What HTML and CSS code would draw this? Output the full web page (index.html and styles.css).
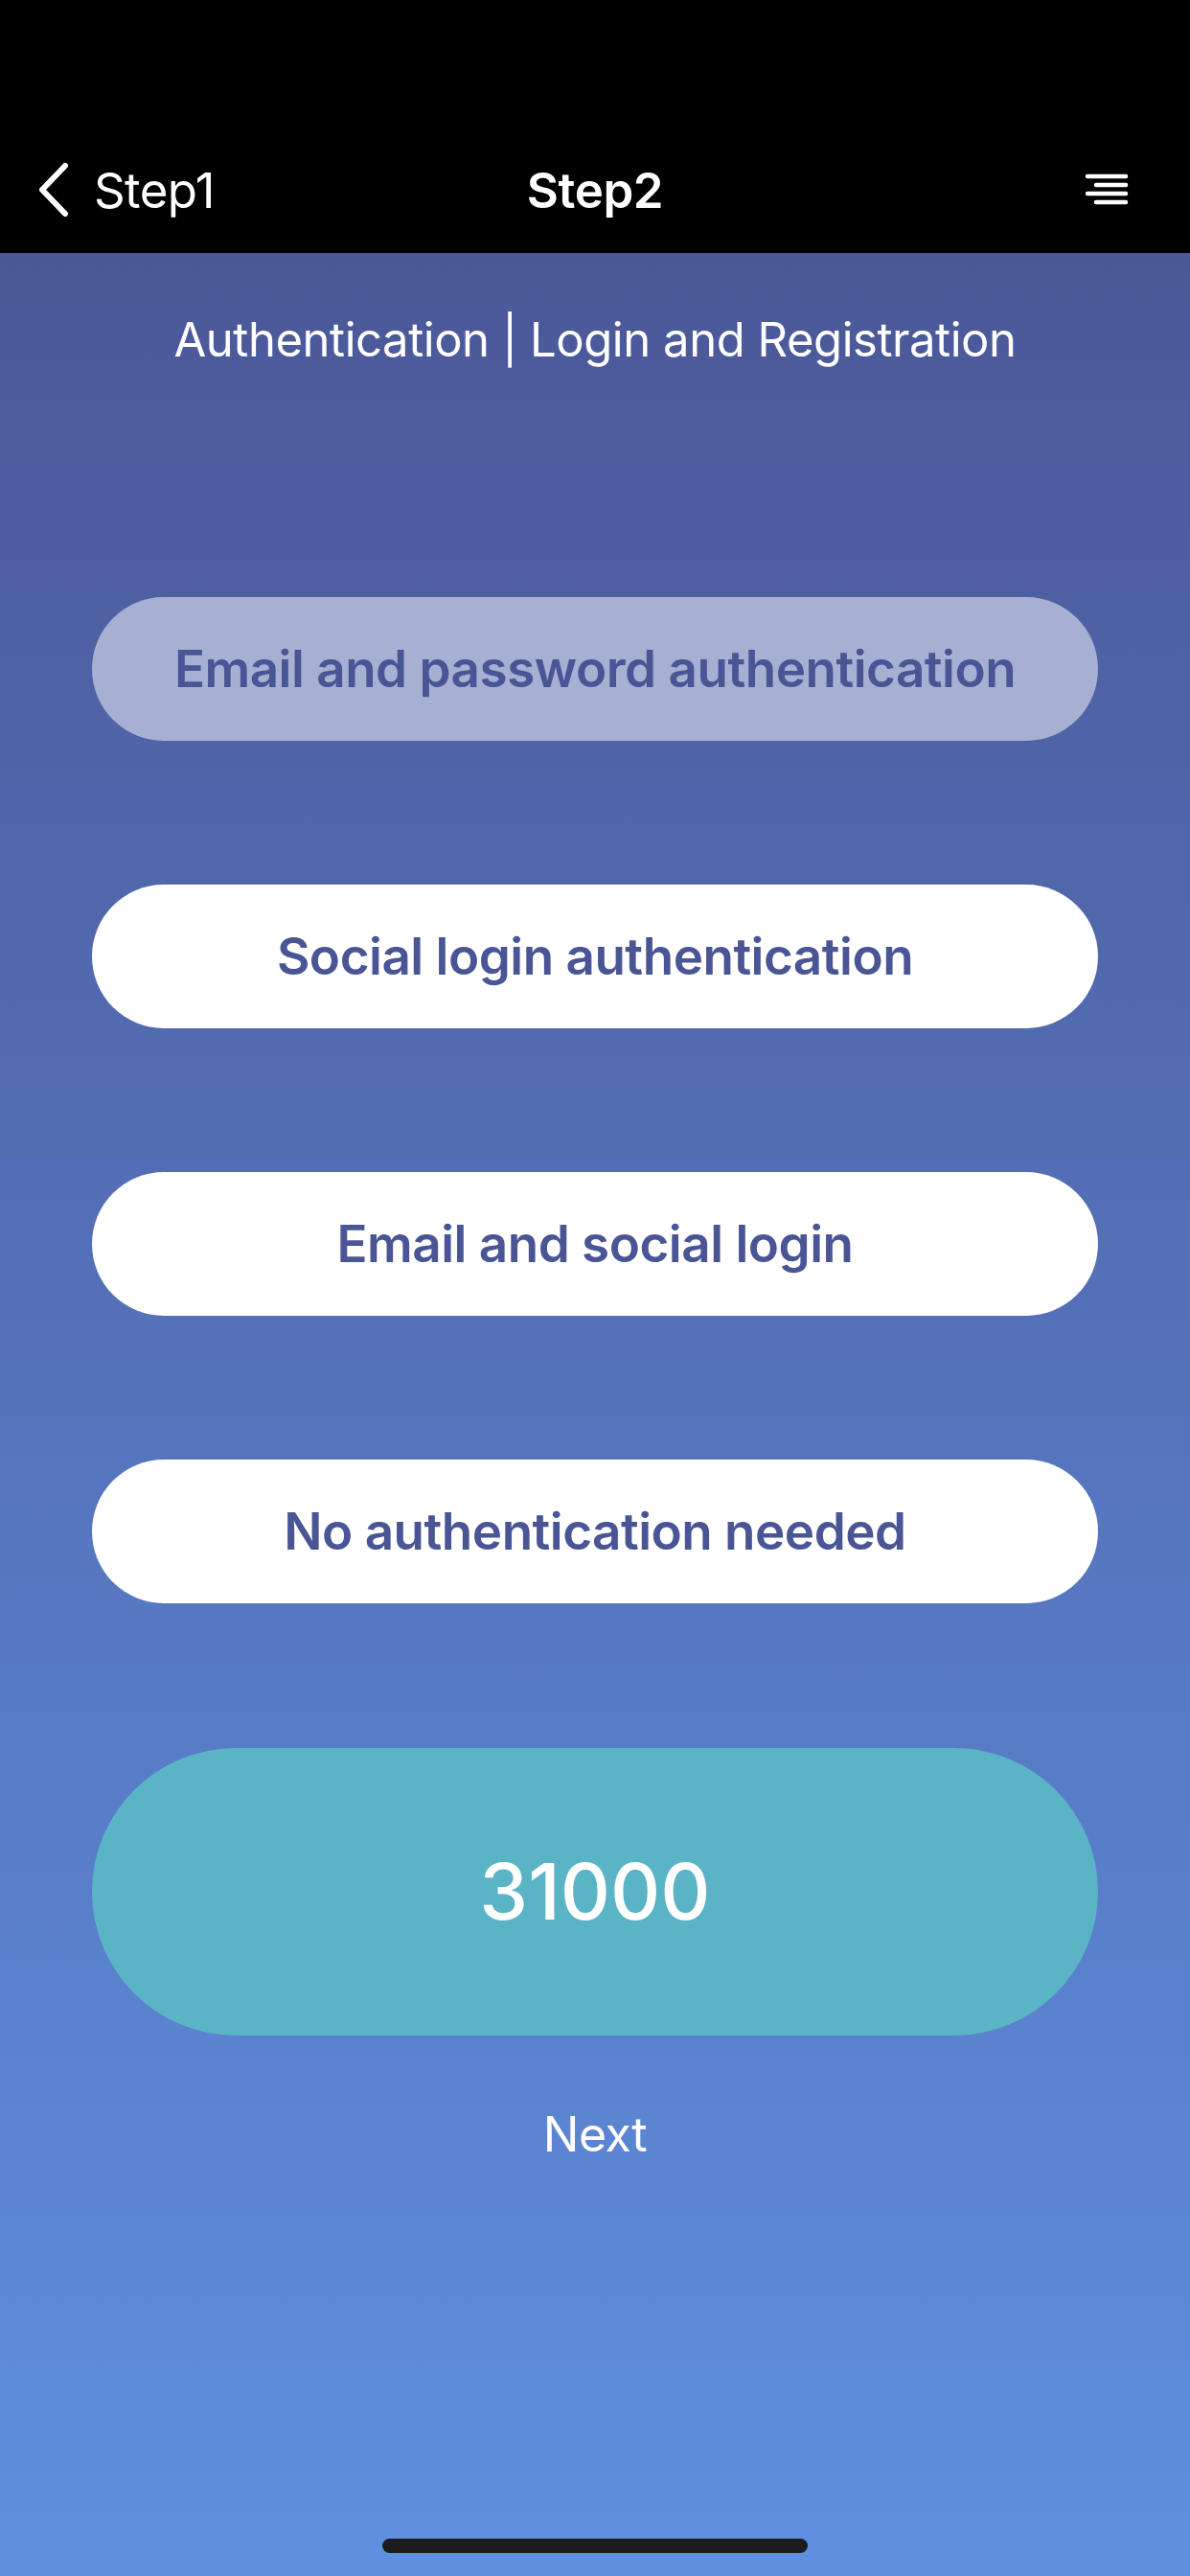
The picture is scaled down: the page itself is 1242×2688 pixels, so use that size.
FILE: index.html
```html
<!DOCTYPE html>
<html lang="en">
<head>
<meta charset="utf-8">
<title>Step2</title>
<link rel="stylesheet" href="styles.css">
</head>
<body>
<div class="screen">
  <header class="topbar">
    <div class="nav">
      <div class="nav-left">
        <svg class="chev" viewBox="0 0 36 58" width="36" height="58">
          <path d="M30 4 L6 29 L30 54" fill="none" stroke="#fff" stroke-width="6" stroke-linecap="round" stroke-linejoin="round"/>
        </svg>
        <span class="back-label">Step1</span>
      </div>
      <div class="nav-title">Step2</div>
      <div class="nav-right">
        <svg class="menu" viewBox="0 0 46 34" width="46" height="34">
          <g stroke="#fff" stroke-width="4.5" stroke-linecap="round">
            <line x1="3" y1="3" x2="43" y2="3"/>
            <line x1="12" y1="12" x2="43" y2="12"/>
            <line x1="3" y1="21" x2="43" y2="21"/>
            <line x1="12" y1="30" x2="43" y2="30"/>
          </g>
        </svg>
      </div>
    </div>
  </header>
  <main class="content">
    <p class="subtitle">Authentication | Login and Registration</p>
    <div class="options">
      <button class="option option-selected">Email and password authentication</button>
      <button class="option">Social login authentication</button>
      <button class="option">Email and social login</button>
      <button class="option">No authentication needed</button>
    </div>
    <div class="price">31000</div>
    <div class="next">Next</div>
  </main>
  <div class="home-indicator"></div>
</div>
</body>
</html>
```
FILE: styles.css
```css
* { box-sizing: border-box; }
html, body { margin: 0; padding: 0; }
body {
  width: 1242px;
  height: 2688px;
  font-family: Inter, "Noto Sans", "Liberation Sans", sans-serif;
  overflow: hidden;
}
.screen {
  position: relative;
  width: 1242px;
  height: 2688px;
  display: flex;
  flex-direction: column;
  background: linear-gradient(to bottom, #4b5898 264px, #5f8fdf 100%);
}
.topbar {
  height: 264px;
  background: #000;
  padding-top: 132px;
}
.nav {
  height: 132px;
  display: grid;
  grid-template-columns: 1fr auto 1fr;
  align-items: center;
  padding: 0 38px;
  color: #fff;
}
.nav-left {
  display: flex;
  align-items: center;
  gap: 24px;
}
.chev { display: block; }
.back-label {
  font-size: 51px;
  font-weight: 400;
  letter-spacing: -0.6px;
}
.nav-title {
  font-size: 51px;
  font-weight: 600;
  letter-spacing: -0.4px;
}
.nav-right {
  display: flex;
  justify-content: flex-end;
  padding-right: 26px;
}
.menu { display: block; }
.content {
  display: flex;
  flex-direction: column;
  align-items: stretch;
  padding: 0 96px;
}
.subtitle {
  margin: 61px 0 0;
  height: 60px;
  line-height: 60px;
  text-align: center;
  color: #fff;
  font-size: 49px;
  font-weight: 400;
  letter-spacing: -0.45px;
}
.options {
  margin-top: 238px;
  display: flex;
  flex-direction: column;
  gap: 150px;
}
.option {
  height: 150px;
  border: none;
  border-radius: 75px;
  background: #fff;
  color: #4a5595;
  font-family: inherit;
  font-size: 53px;
  font-weight: 600;
  letter-spacing: -0.5px;
  padding: 0;
}
.option-selected {
  background: #a7b0d2;
}
.price {
  margin-top: 151px;
  height: 300px;
  border-radius: 150px;
  background: #5bb3c6;
  color: #fff;
  display: flex;
  align-items: center;
  justify-content: center;
  font-size: 81px;
  font-weight: 500;
}
.next {
  margin-top: 73px;
  height: 60px;
  line-height: 60px;
  text-align: center;
  color: #fff;
  font-size: 50px;
  font-weight: 400;
  letter-spacing: -0.5px;
}
.home-indicator {
  position: absolute;
  left: 399px;
  top: 2649px;
  width: 444px;
  height: 15px;
  border-radius: 8px;
  background: #1c1c1e;
}
```
